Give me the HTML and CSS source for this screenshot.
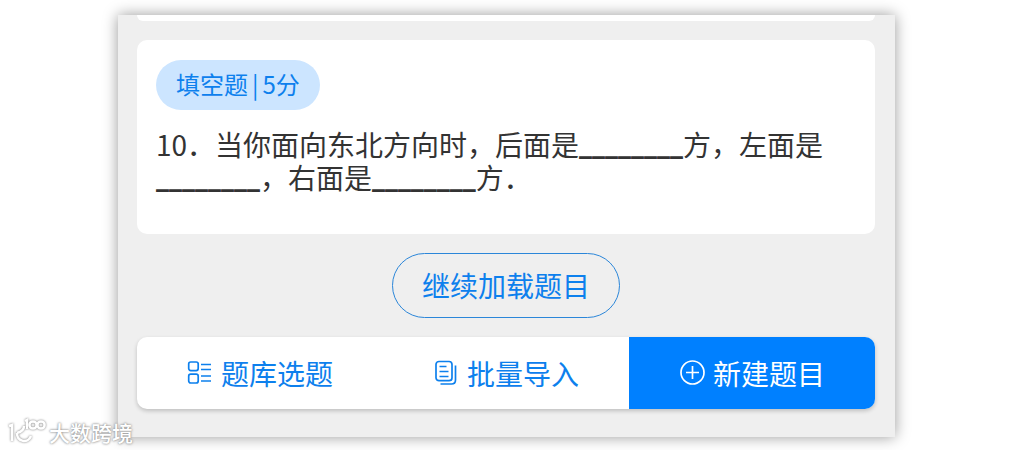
FILE: index.html
```html
<!DOCTYPE html>
<html lang="zh-CN">
<head>
<meta charset="utf-8">
<title>新建题目</title>
<link rel="stylesheet" href="styles.css">
</head>
<body>
<main class="panel">
  <div class="previous-card"></div>
  <article class="card">
    <div class="tag"><span>填空题</span><span>|</span><span>5分</span></div>
    <p class="question">10．当你面向东北方向时，后面是<span class="blank">________</span>方，左面是<span class="blank">________</span>，右面是<span class="blank">________</span>方．</p>
  </article>
  <button class="load-more" type="button">继续加载题目</button>
  <nav class="actions">
    <button class="action" type="button">
      <svg class="icon" viewBox="0 0 26 26" aria-hidden="true"><rect x="1.7" y="2" width="9.5" height="8.6" rx="2"/><rect x="1.7" y="14.2" width="9.5" height="8.8" rx="2"/><path d="M14 4.5h10M14 9.5h10M14 16h10M14 21h10"/></svg>
      <span>题库选题</span>
    </button>
    <button class="action" type="button">
      <svg class="icon" viewBox="0 0 26 26" aria-hidden="true"><rect x="3" y="1.5" width="16" height="19.2" rx="3"/><path d="M6.5 6.5h7M6.5 11.5h9M6.5 16.5h9M22.5 5.5V20q0 4-4 4H7.500"/></svg>
      <span>批量导入</span>
    </button>
    <button class="action action-primary" type="button">
      <svg class="icon" viewBox="0 0 26 26" aria-hidden="true"><circle cx="13.500" cy="12.500" r="11.500"/><path d="M13.500 6v13M7 12.500h13"/></svg>
      <span>新建题目</span>
    </button>
  </nav>
</main>
<div class="watermark">
  <svg class="watermark-logo" viewBox="0 0 38 28" aria-hidden="true"><path d="M1 8l3-1v16M16 8c0 4-3 6-7 7M9 15c0 9 11 11 14 3M17 3l2-1v9"/><circle cx="25" cy="7" r="3.600"/><circle cx="33" cy="7" r="3.600"/></svg>
  <span>大数跨境</span>
</div>
</body>
</html>
```
FILE: styles.css
```css
* { box-sizing: border-box; }

body {
  margin: 0;
  padding: 15px 118px 13px;
  background: #fff;
  color: #333;
  font-family: "Noto Sans CJK SC", sans-serif;
  font-size: 28px;
  overflow: hidden;
}

.panel {
  display: flex;
  flex-direction: column;
  padding: 0 20px 28px 19px;
  background: #efefef;
  box-shadow: 0 0 14px rgba(0, 0, 0, 0.4);
}

.previous-card {
  height: 6px;
  margin-bottom: 19px;
  background: #fff;
  border-radius: 0 0 8px 8px;
}

.card {
  padding: 20px 19px 40px;
  background: #fff;
  border-radius: 10px;
}

.tag {
  display: flex;
  width: fit-content;
  gap: 4px;
  padding: 0 20px 2px;
  border-radius: 25px;
  background: #cce5ff;
  color: #0d80ed;
  font-size: 24px;
  line-height: 48px;
}

.question {
  margin: 18px 0 0;
  line-height: 33px;
}

.blank {
  font-family: Roboto, sans-serif;
  font-size: 29px;
  font-weight: 500;
  line-height: 1;
}

button {
  margin: 0;
  font: inherit;
  cursor: pointer;
}

.load-more {
  align-self: center;
  margin: 19px 0;
  padding: 0 29px;
  border: 1px solid #2b86d9;
  border-radius: 33px;
  background: transparent;
  color: #0d80ed;
  line-height: 63px;
}

.actions {
  display: grid;
  grid-template-columns: repeat(3, 1fr);
  border-radius: 10px;
  background: #fff;
  box-shadow: 0 2px 4px rgba(0, 0, 0, 0.2);
  overflow: hidden;
}

.action {
  display: flex;
  align-items: center;
  justify-content: center;
  gap: 8px;
  padding: 0;
  border: 0;
  background: transparent;
  color: #0d80ed;
  line-height: 72px;
}

.action-primary {
  background: #0080ff;
  color: #fff;
}

.icon {
  width: 26px;
  height: 26px;
  fill: none;
  stroke: currentColor;
  stroke-width: 1.7;
}

.watermark {
  position: absolute;
  left: 8px;
  bottom: 4px;
  display: flex;
  align-items: center;
  gap: 3px;
  color: #fff;
  font-size: 21px;
  font-weight: 500;
  line-height: 28px;
  text-shadow: 0 0 2px #888, 0 0 3px #aaa;
}

.watermark-logo {
  width: 38px;
  height: 28px;
  fill: none;
  stroke: #fff;
  stroke-width: 2.5;
  filter: drop-shadow(0 0 1px #777);
  overflow: visible;
}
```
